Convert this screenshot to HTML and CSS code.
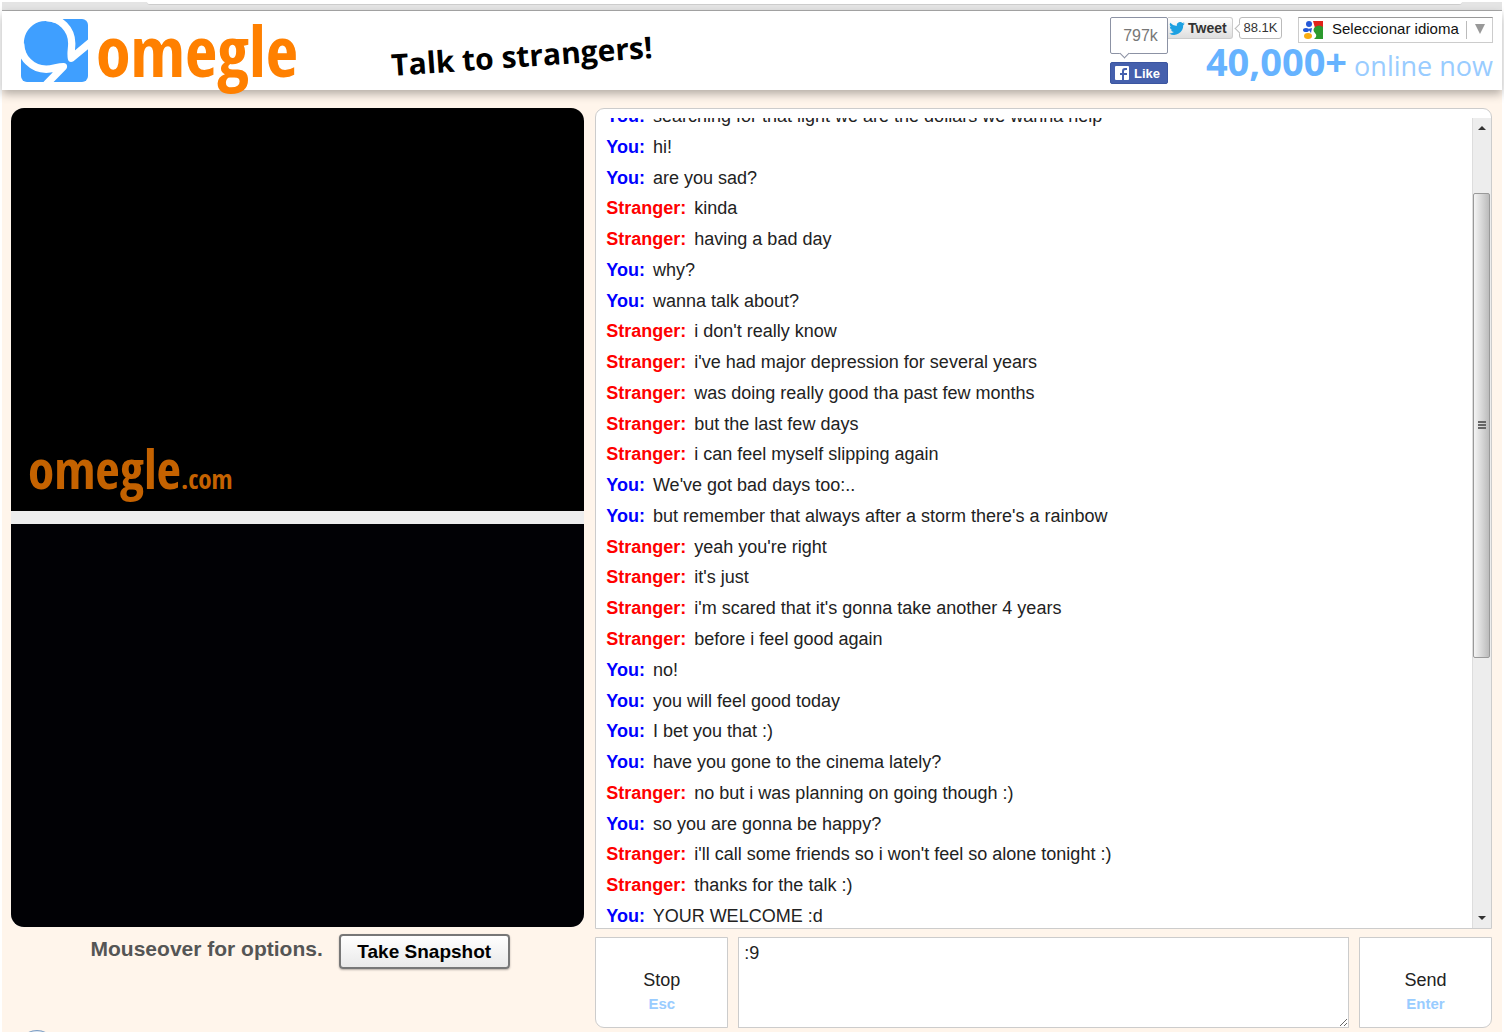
FILE: index.html
```html
<!DOCTYPE html>
<html lang="en">
<head>
  <meta charset="UTF-8">
  <meta name="viewport" content="width=device-width, initial-scale=1.0">
  <title>Omegle: Talk to strangers!</title>
  <link rel="stylesheet" href="styles.css">
</head>
<body>
  <div class="toolbar"><div class="toolbar-inner"></div></div>

  <header class="header">
    <a class="logo" href="#">
      <svg class="logo-mark" viewBox="62 57 202 188" preserveAspectRatio="none" aria-hidden="true">
        <rect x="62" y="57" width="202" height="188" rx="18" fill="#3f9fff"/>
        <path d="M50 50H180L164 69A66 66 0 0 0 76 155L50 160Z" fill="#fff"/>
        <path d="M138 53A77 77 0 0 1 215 130C215 146 211 158 214 174L272 126" fill="none" stroke="#fff" stroke-width="22" stroke-linejoin="round"/>
        <path d="M61 130A77 77 0 0 0 138 207C158 207 172 199 190 199L138 252" fill="none" stroke="#fff" stroke-width="22" stroke-linejoin="round"/>
      </svg>
      <span class="logo-text">omegle</span>
    </a>
    <p class="tagline">Talk to strangers!</p>

    <div class="facebook">
      <span class="like-count">797k</span>
      <button class="like" type="button">
        <svg width="14" height="14" viewBox="0 0 14 14" aria-hidden="true">
          <rect width="14" height="14" rx="1" fill="#fff"/>
          <path d="M7 14V9H5V7H7V5Q7 2 10 2H12V4H11Q9 4 9 5V7H12V9H9V14Z" fill="#4560ad"/>
        </svg>
        Like
      </button>
    </div>

    <div class="header-right">
      <div class="social">
        <button class="tweet" type="button">
          <svg width="16" height="13" viewBox="0 0 24 20" aria-hidden="true">
            <path d="M24 2.4a10 10 0 0 1-2.8.8A5 5 0 0 0 23.300.5a10 10 0 0 1-3.100 1.200A4.900 4.900 0 0 0 11.800 6.200 14 14 0 0 1 1.700 1a4.900 4.900 0 0 0 1.500 6.600A5 5 0 0 1 1 7a4.900 4.900 0 0 0 3.900 4.900 5 5 0 0 1-2.200.1 4.900 4.900 0 0 0 4.600 3.400A10 10 0 0 1 0 17.500 14 14 0 0 0 21.500 5 10 10 0 0 0 24 2.400Z" fill="#1da1e2"/>
          </svg>
          Tweet
        </button>
        <span class="tweet-count">88.1K</span>
        <div class="language">
          <svg width="20" height="20" viewBox="0 0 20 20" aria-hidden="true">
            <path d="M10 1H20V8H12Z" fill="#e2231a"/>
            <path d="M12 7Q16 4 20 7V19H11Q15 16 12 13Q9 10 12 7Z" fill="#2c9a2e"/>
            <ellipse cx="6" cy="4" rx="3" ry="3" fill="#2559d8"/>
            <ellipse cx="3" cy="10" rx="3" ry="2" fill="#2559d8"/>
            <path d="M5 9L9 8L8 13Z" fill="#2559d8"/>
            <ellipse cx="5" cy="16" rx="4" ry="3" fill="#f8ac12"/>
          </svg>
          <select aria-label="Seleccionar idioma">
            <option>Seleccionar idioma</option>
          </select>
          <span class="arrow"></span>
        </div>
      </div>
      <p class="online"><strong>40,000+</strong> online now</p>
    </div>
  </header>

  <main class="main">
    <section class="left">
      <div class="videos">
        <div class="video">
          <div class="watermark">omegle<small>.com</small></div>
        </div>
        <div class="video own"></div>
      </div>
      <div class="options">
        <span>Mouseover for options.</span>
        <button class="snapshot" type="button">Take Snapshot</button>
      </div>
    </section>

    <section class="right">
      <div class="log">
        <div class="log-view">
          <ul class="messages">
            <li><b class="you">You:</b> searching for that light we are the dollars we wanna help</li>
            <li><b class="you">You:</b> hi!</li>
            <li><b class="you">You:</b> are you sad?</li>
            <li><b class="stranger">Stranger:</b> kinda</li>
            <li><b class="stranger">Stranger:</b> having a bad day</li>
            <li><b class="you">You:</b> why?</li>
            <li><b class="you">You:</b> wanna talk about?</li>
            <li><b class="stranger">Stranger:</b> i don't really know</li>
            <li><b class="stranger">Stranger:</b> i've had major depression for several years</li>
            <li><b class="stranger">Stranger:</b> was doing really good tha past few months</li>
            <li><b class="stranger">Stranger:</b> but the last few days</li>
            <li><b class="stranger">Stranger:</b> i can feel myself slipping again</li>
            <li><b class="you">You:</b> We've got bad days too:..</li>
            <li><b class="you">You:</b> but remember that always after a storm there's a rainbow</li>
            <li><b class="stranger">Stranger:</b> yeah you're right</li>
            <li><b class="stranger">Stranger:</b> it's just</li>
            <li><b class="stranger">Stranger:</b> i'm scared that it's gonna take another 4 years</li>
            <li><b class="stranger">Stranger:</b> before i feel good again</li>
            <li><b class="you">You:</b> no!</li>
            <li><b class="you">You:</b> you will feel good today</li>
            <li><b class="you">You:</b> I bet you that :)</li>
            <li><b class="you">You:</b> have you gone to the cinema lately?</li>
            <li><b class="stranger">Stranger:</b> no but i was planning on going though :)</li>
            <li><b class="you">You:</b> so you are gonna be happy?</li>
            <li><b class="stranger">Stranger:</b> i'll call some friends so i won't feel so alone tonight :)</li>
            <li><b class="stranger">Stranger:</b> thanks for the talk :)</li>
            <li><b class="you">You:</b> YOUR WELCOME :d</li>
          </ul>
          <div class="scrollbar">
            <span class="scroll-up"></span>
            <div class="track"><div class="thumb"><i></i><i></i><i></i></div></div>
            <span class="scroll-down"></span>
          </div>
        </div>
      </div>

      <form class="controls">
        <button class="stop" type="button">Stop<small>Esc</small></button>
        <textarea aria-label="Message">:9</textarea>
        <button class="send" type="button">Send<small>Enter</small></button>
      </form>
    </section>
    <span class="corner"></span>
  </main>
</body>
</html>
```

FILE: styles.css
```css
* {
  padding: 0;
  margin: 0;
  box-sizing: border-box;
}

body {
  display: flex;
  flex-direction: column;
  height: 100vh;
  padding: 2px 2px 3px;
  background-color: #fff;
  font-family: "Liberation Sans", Arial, sans-serif;
  font-size: 18px;
  color: #222;
}

button,
select,
textarea {
  font-family: inherit;
  color: inherit;
}

.toolbar {
  height: 9px;
  padding: 0 40px 0 145px;
  background-color: #e4e4e4;
  border-bottom: 1px solid #aaa;
}

.toolbar-inner {
  height: 3px;
  background-color: #fff;
  border-bottom: 1px solid #ccc;
  border-radius: 0 0 3px 3px;
}

/* Header */
.header {
  position: relative;
  z-index: 1;
  display: flex;
  height: 79px;
  background-color: #fff;
  box-shadow: 0 4px 9px rgba(0, 0, 0, 0.3);
}

.logo {
  display: flex;
  align-items: flex-start;
  gap: 8px;
  width: 388px;
  padding: 8px 0 0 19px;
  text-decoration: none;
}

.logo-mark {
  width: 67px;
  height: 63px;
}

.logo-text {
  font-family: "Open Sans Condensed", Roboto, sans-serif;
  font-size: 70px;
  font-weight: bold;
  line-height: 62px;
  color: #ff8000;
}

.tagline {
  height: 64px;
  padding-top: 25px;
  font-family: "Open Sans", sans-serif;
  font-size: 30px;
  font-weight: bold;
  line-height: 40px;
  white-space: nowrap;
  color: #000;
  transform: rotate(-4deg);
}

.facebook {
  display: flex;
  flex-direction: column;
  gap: 8px;
  width: 58px;
  margin-left: auto;
  padding-top: 6px;
}

.like-count {
  position: relative;
  height: 37px;
  padding-left: 3px;
  border: 1px solid #8c92a4;
  border-radius: 2px;
  font-size: 16px;
  line-height: 36px;
  text-align: center;
  color: #777;
}

.like-count::after {
  content: "";
  position: absolute;
  left: 10px;
  bottom: -4px;
  width: 6px;
  height: 6px;
  background-color: #fff;
  border: solid #8c92a4;
  border-width: 0 1px 1px 0;
  transform: rotate(45deg);
}

.like {
  display: flex;
  align-items: center;
  gap: 5px;
  height: 22px;
  padding-left: 4px;
  background-color: #4560ad;
  border: 1px solid #3b55a0;
  border-radius: 2px;
  font-size: 13px;
  font-weight: bold;
  color: #fff;
}

.header-right {
  width: 334px;
  padding: 6px 9px 0 0;
}

.social {
  display: flex;
}

.tweet {
  display: flex;
  align-items: center;
  gap: 3px;
  width: 65px;
  height: 22px;
  padding-left: 1px;
  background: linear-gradient(#fff, #dedede);
  border: 1px solid #ccc;
  border-left: none;
  border-radius: 0 3px 3px 0;
  font-size: 14px;
  font-weight: bold;
  color: #333;
}

.tweet-count {
  position: relative;
  width: 43px;
  height: 22px;
  margin: 0 16px 0 6px;
  border: 1px solid #bbb;
  border-radius: 3px;
  font-size: 13px;
  line-height: 20px;
  text-align: center;
  color: #333;
}

.tweet-count::before {
  content: "";
  position: absolute;
  left: -4px;
  top: 7px;
  width: 6px;
  height: 6px;
  background-color: #fff;
  border: solid #bbb;
  border-width: 0 0 1px 1px;
  transform: rotate(45deg);
}

.language {
  display: flex;
  align-items: center;
  width: 195px;
  height: 26px;
  padding-left: 4px;
  border: 1px solid #ccc;
  border-top-color: #999;
}

.language select {
  appearance: none;
  flex: 1;
  height: 24px;
  padding: 0 0 4px 9px;
  background: none;
  border: none;
  font-size: 15px;
  color: #111;
}

.arrow {
  display: flex;
  width: 26px;
  height: 18px;
  padding: 3px 0 0 8px;
  border-left: 1px solid #bbb;
}

.arrow::after {
  content: "";
  border: solid transparent;
  border-width: 10px 5px 0;
  border-top-color: #999;
  height: 0;
}

.online {
  font-family: "Open Sans", sans-serif;
  font-size: 27px;
  line-height: 36px;
  text-align: right;
  white-space: nowrap;
  color: #99ccff;
}

.online strong {
  font-size: 38px;
  color: #66b3ff;
}

/* Page body */
.main {
  position: relative;
  flex: 1;
  min-height: 0;
  display: grid;
  grid-template-columns: 39fr 61fr;
  gap: 11px;
  padding: 18px 10px 4px 9px;
  overflow: hidden;
  background-color: #fff5eb;
}

.left,
.right {
  display: flex;
  flex-direction: column;
  min-height: 0;
}

.videos {
  flex: 1;
  display: flex;
  flex-direction: column;
  gap: 13px;
  overflow: hidden;
  background-color: #ededed;
  border-radius: 13px;
}

.video {
  flex: 1;
  display: flex;
  align-items: flex-end;
  padding: 0 17px 2px;
  background-color: #000;
}

.own {
  background-color: #010105;
}

.watermark {
  font-family: "Open Sans Condensed", Roboto, sans-serif;
  font-size: 53px;
  font-weight: bold;
  line-height: 60px;
  color: #c46200;
}

.watermark small {
  font-size: 27px;
  font-weight: normal;
}

.options {
  display: flex;
  justify-content: center;
  align-items: flex-start;
  gap: 16px;
  height: 101px;
  padding: 7px 0 0 5px;
  font-size: 21px;
  font-weight: bold;
  line-height: 30px;
  color: #555;
}

.snapshot {
  width: 171px;
  height: 35px;
  background: linear-gradient(#fff, #e9e9e9);
  border: 2px solid #777;
  border-radius: 4px;
  box-shadow: 0 1px 2px rgba(0, 0, 0, 0.3);
  font-size: 19px;
  font-weight: bold;
  color: #000;
}

.log {
  flex: 1;
  min-height: 0;
  padding-top: 9px;
  background-color: #fff;
  border: 1px solid #ccc;
  border-radius: 9px 9px 0 0;
}

.log-view {
  display: flex;
  height: 100%;
  overflow: hidden;
}

/* The list is scrolled past its first line */
.messages {
  flex: 1;
  display: flex;
  flex-direction: column;
  justify-content: space-between;
  height: calc(100% + 12px);
  margin-top: -13px;
  padding-left: 10px;
  line-height: 22px;
  list-style: none;
}

.messages b {
  margin-right: 3px;
}

.you {
  color: #0000ff;
}

.stranger {
  color: #ff0000;
}

.scrollbar {
  display: flex;
  flex-direction: column;
  align-items: center;
  width: 19px;
  background-color: #ededed;
  border-left: 1px solid #ddd;
}

.scroll-up,
.scroll-down {
  margin: 8px 0;
  border: 4px solid transparent;
}

.scroll-up {
  border-top: none;
  border-bottom-color: #333;
}

.scroll-down {
  border-bottom: none;
  border-top-color: #333;
}

.track {
  flex: 1;
  align-self: stretch;
  padding: 55px 1px 0 0;
}

.thumb {
  display: flex;
  flex-direction: column;
  justify-content: center;
  align-items: center;
  gap: 1px;
  height: 65%;
  background: linear-gradient(to right, #f4f4f4, #d8d8d8 50%, #bbb);
  border: 1px solid #999;
  border-radius: 2px;
}

.thumb i {
  width: 8px;
  height: 2px;
  background-color: #666;
}

.controls {
  display: flex;
  gap: 10px;
  height: 91px;
  margin-top: 8px;
}

.stop,
.send {
  display: flex;
  flex-direction: column;
  align-items: center;
  justify-content: center;
  gap: 4px;
  width: 133px;
  padding-top: 16px;
  background-color: #fff;
  border: 1px solid #ccc;
  font-size: 18px;
}

.stop {
  border-bottom-left-radius: 9px;
}

.send {
  border-bottom-right-radius: 9px;
}

.stop small,
.send small {
  font-size: 15px;
  font-weight: bold;
  color: #99ccff;
}

.controls textarea {
  flex: 1;
  padding: 5px;
  background-color: #fff;
  border: 1px solid #ccc;
  font-size: 18px;
  outline: none;
}

/* Top of the round button below the fold */
.corner {
  position: absolute;
  left: 18px;
  bottom: -28px;
  width: 34px;
  height: 30px;
  background-color: #dce6f2;
  border: 1px solid #7a9cc4;
  border-radius: 50%;
}
```
